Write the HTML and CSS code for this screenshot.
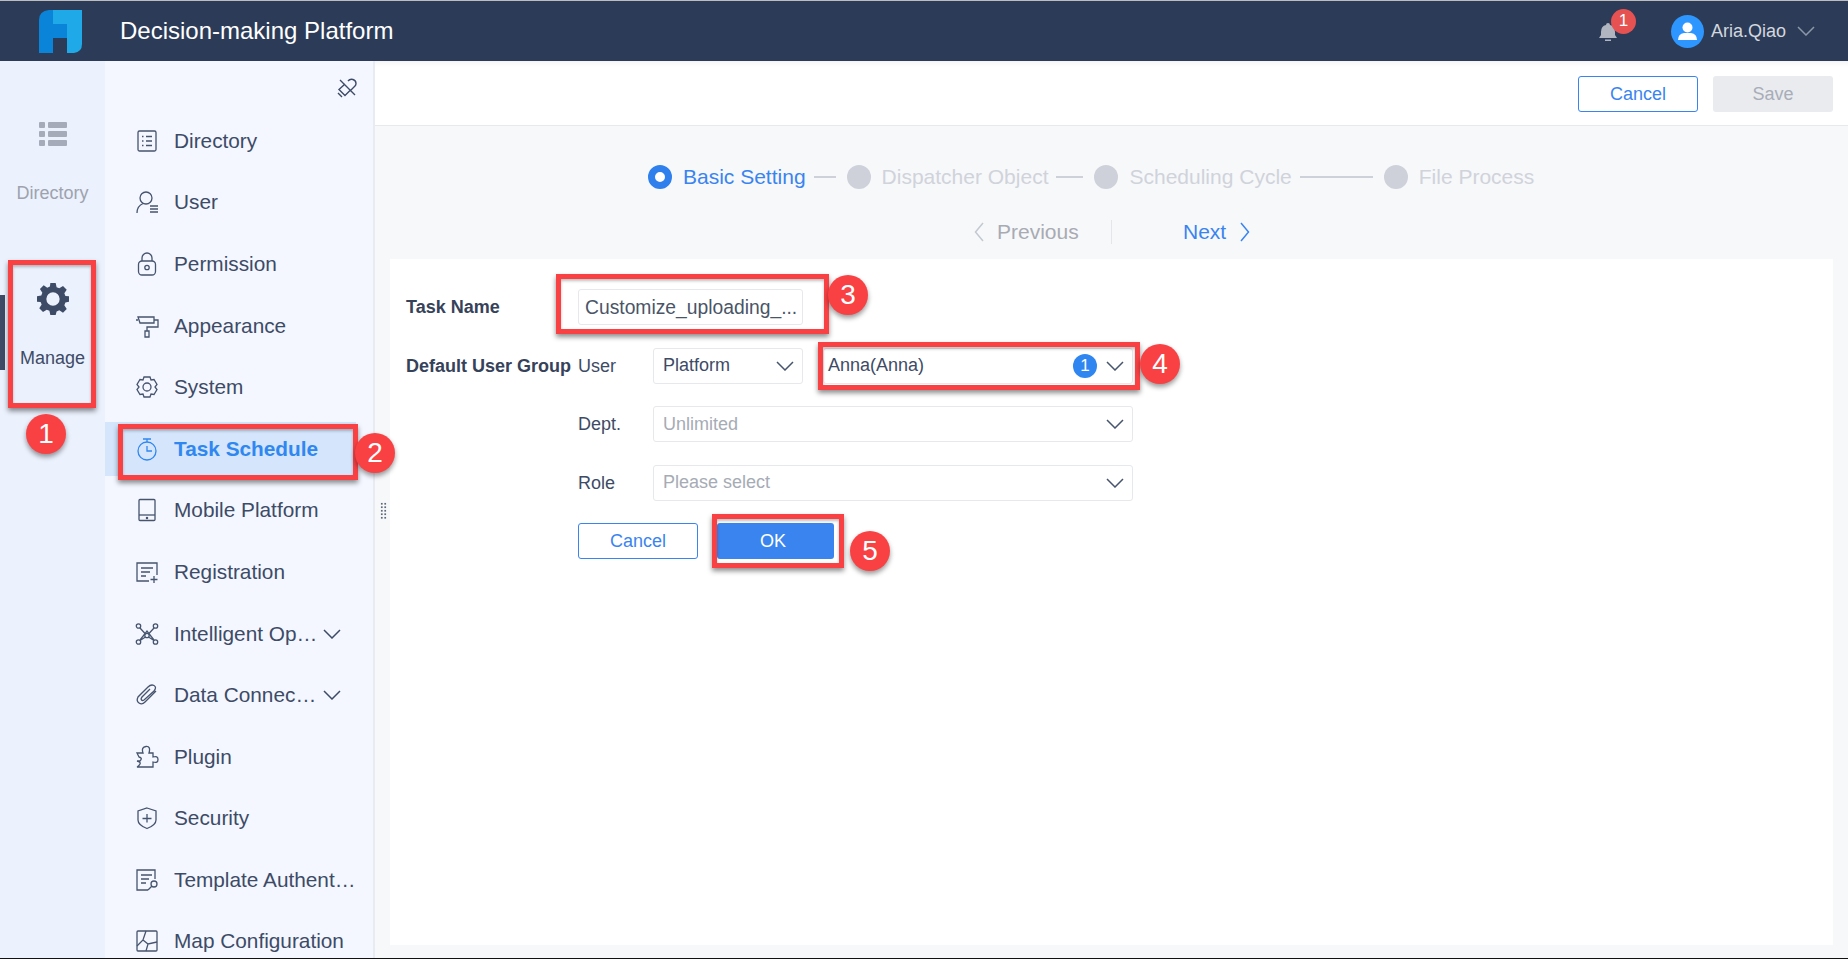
FILE: index.html
```html
<!DOCTYPE html>
<html lang="en">
  <head>
    <meta charset="UTF-8" />
    <meta name="viewport" content="width=device-width, initial-scale=1.0" />
    <title>Decision-making Platform</title>
    <link rel="stylesheet" href="styles.css">
  </head>
  <body>
    <svg class="defs" width="0" height="0">
      <symbol id="chev" viewBox="0 0 18 10"><path d="M1 1l8 8 8-8" fill="none" stroke="currentColor" stroke-width="1.5"/></symbol>
    </svg>
    <div class="app">
      <header class="topbar">
        <svg class="logo" width="44" height="44" viewBox="0 0 44 44">
          <path d="M14 0h29v34q0 8-8 9h-7V14h-14z" fill="#1fa9e8"/>
          <path d="M14 0v14h14v14H14v15H0V10Q0 1 10 0z" fill="#0a84d8"/>
        </svg>
        <div class="title">Decision-making Platform</div>
        <div class="bell">
          <svg width="18" height="19" viewBox="0 0 18 19"><path d="M9 0q2 0 2 2q5 1 5 7v3l2 3H0l2-3V9q0-6 5-7q0-2 2-2zM6 16.500h6v1.500H6z" fill="#b0b5bf"/></svg>
          <span class="bell-badge">1</span>
        </div>
        <div class="avatar">
          <svg width="19" height="19" viewBox="0 0 19 19"><circle cx="9.500" cy="5.500" r="5" fill="#fff"/><path d="M0 18q0-6 6-7h7q6 1 6 7z" fill="#fff"/></svg>
        </div>
        <div class="username">Aria.Qiao</div>
        <svg class="user-chev"><use href="#chev"/></svg>
      </header>

      <div class="main">
        <nav class="rail">
          <div class="rail-item">
            <svg class="rail-icon" width="30" height="30" viewBox="0 0 30 30" fill="#a5abb8">
              <rect x="1" y="3" width="6" height="6" rx="1"/><rect x="10" y="3" width="19" height="6" rx="1"/>
              <rect x="1" y="12" width="6" height="6" rx="1"/><rect x="10" y="12" width="19" height="6" rx="1"/>
              <rect x="1" y="21" width="6" height="6" rx="1"/><rect x="10" y="21" width="19" height="6" rx="1"/>
            </svg>
            <span class="rail-label">Directory</span>
          </div>
          <div class="rail-item active">
            <svg class="rail-icon" width="32" height="32" viewBox="0 0 24 24" fill="#3d4b66">
              <path fill-rule="evenodd" d="M10 0h4l.7 3.200 2 .8L19.500 2.200l2.800 2.800L20.500 7.700l.8 2 2.700.3v4l-2.700.7-.8 2 1.800 2.800-2.800 2.800-2.800-1.800-2 .8L14 24h-4l-.7-3.200-2-.8-2.800 1.800-2.800-2.800 1.800-2.800-.8-2L0 14v-4l3.200-.7.8-2L2.200 4.500 5 1.700l2.700 1.800 2-.8zM12 7a5 5 0 1 0 0 10 5 5 0 0 0 0-10z"/>
            </svg>
            <span class="rail-label">Manage</span>
          </div>
        </nav>

        <aside class="side">
          <div class="pin-row">
            <svg width="20" height="20" viewBox="0 0 20 20" fill="none" stroke="#3d4b66" stroke-width="1.400">
              <path d="M3 2l15 15M11 3q2-2.500 5-1.500t3 4q0 1.500-1 2.500l-5 5M8 6l-6 5.500 6 6 5-5M1 15l4 4"/>
            </svg>
          </div>
          <ul class="menu">
            <li class="menu-item">
              <svg class="ico" viewBox="0 0 24 24"><rect x="3" y="2" width="18" height="20" rx="1.500"/><path d="M11 7.500h6M11 12h6M11 16.500h6M7 7.500h1.500M7 12h1.500M7 16.500h1.500"/></svg>
              <span class="menu-text">Directory</span>
            </li>
            <li class="menu-item">
              <svg class="ico" viewBox="0 0 24 24"><circle cx="11" cy="8" r="6"/><path d="M2 23q0-7 6-9.500M15 16h8M15 19h8M15 22h8"/></svg>
              <span class="menu-text">User</span>
            </li>
            <li class="menu-item">
              <svg class="ico" viewBox="0 0 24 24"><rect x="3.500" y="9" width="17" height="14" rx="3.500"/><path d="M7 9V6a5 5 0 0 1 10 0v3"/><circle cx="12" cy="15.500" r="2.200"/></svg>
              <span class="menu-text">Permission</span>
            </li>
            <li class="menu-item">
              <svg class="ico" viewBox="0 0 24 24"><path d="M3 3h16v6H5zM3 6H1M19 6h4v7H12v4M10 17h4v6h-4z"/></svg>
              <span class="menu-text">Appearance</span>
            </li>
            <li class="menu-item">
              <svg class="ico" viewBox="0 0 24 24"><path d="M9 2h6l1 3 3-.5 3 5-2 2.500 2 2.500-3 5-3-.5-1 3H9l-1-3-3 .5-3-5L4 12 2 9.500l3-5 3 .5z"/><circle cx="12" cy="12" r="4"/></svg>
              <span class="menu-text">System</span>
            </li>
            <li class="menu-item active">
              <svg class="ico" viewBox="0 0 24 24"><circle cx="12" cy="14" r="9"/><path d="M8 2h8M12 2v3M12 9v5h5"/></svg>
              <span class="menu-text">Task Schedule</span>
            </li>
            <li class="menu-item">
              <svg class="ico" viewBox="0 0 24 24"><rect x="4" y="1.500" width="16" height="21" rx="1"/><path d="M4 17h16"/><circle cx="12" cy="20" r=".6"/></svg>
              <span class="menu-text">Mobile Platform</span>
            </li>
            <li class="menu-item">
              <svg class="ico" viewBox="0 0 24 24"><path d="M14 21H2V3h20v12M6 8h12M6 12h9M6 16h5M19 16v7M15.500 19.500h7"/></svg>
              <span class="menu-text">Registration</span>
            </li>
            <li class="menu-item">
              <svg class="ico" viewBox="0 0 24 24"><circle cx="3.500" cy="4" r="2.200"/><circle cx="20.500" cy="4" r="2.200"/><circle cx="3.500" cy="20" r="2.200"/><circle cx="20.500" cy="20" r="2.200"/><circle cx="12" cy="13.500" r="2.200"/><path d="M5 6l5.500 6M19 6l-5.500 6M5 18.500l5.500-3.500M19 18.500L13.500 15M5 18l7-9 7 9"/></svg>
              <span class="menu-text">Intelligent Operation</span>
              <svg class="menu-chev"><use href="#chev"/></svg>
            </li>
            <li class="menu-item">
              <svg class="ico" viewBox="0 0 24 24"><path d="M21 8L10 19q-3 3-6 1t-1-6L13 4q3-3 6-1.500T19 8L9 17q-1.500 1-2.500 0T7 14l8-8"/></svg>
              <span class="menu-text">Data Connection</span>
              <svg class="menu-chev"><use href="#chev"/></svg>
            </li>
            <li class="menu-item">
              <svg class="ico" viewBox="0 0 24 24"><path d="M2 8h6Q6 2 11 1.500T14 8h4v4q5-1.500 5 2.500T18 17v5H2q2-1 3-3t-3-3h3q3-3-1-4z"/></svg>
              <span class="menu-text">Plugin</span>
            </li>
            <li class="menu-item">
              <svg class="ico" viewBox="0 0 24 24"><path d="M12 2l9 3v9q0 5-9 8.500Q3 19 3 14V5zM12 8v8.500M7.500 12.500h9"/></svg>
              <span class="menu-text">Security</span>
            </li>
            <li class="menu-item">
              <svg class="ico" viewBox="0 0 24 24"><path d="M13 22H2V2h18v9M6 7h11M6 11h8M6 15h5"/><circle cx="19" cy="16" r="3"/><path d="M17 18l-4 4"/></svg>
              <span class="menu-text">Template Authentication</span>
            </li>
            <li class="menu-item">
              <svg class="ico" viewBox="0 0 24 24"><rect x="2" y="2" width="20" height="20" rx="1"/><path d="M11 2l-3 9-6 6M8 11l5 4 9-2M13 15l-2 7"/></svg>
              <span class="menu-text">Map Configuration</span>
            </li>
          </ul>
        </aside>

        <section class="content">
          <div class="toolbar">
            <button class="btn btn-line" type="button">Cancel</button>
            <button class="btn btn-off" type="button">Save</button>
          </div>

          <div class="steps">
            <span class="dot dot-on"></span>
            <span class="step-text on">Basic Setting</span>
            <span class="step-line first"></span>
            <span class="dot"></span>
            <span class="step-text">Dispatcher Object</span>
            <span class="step-line second"></span>
            <span class="dot"></span>
            <span class="step-text">Scheduling Cycle</span>
            <span class="step-line long"></span>
            <span class="dot"></span>
            <span class="step-text">File Process</span>
          </div>

          <div class="pager">
            <div class="pager-prev">
              <svg width="10" height="20" viewBox="0 0 10 20"><path d="M9 1L1.500 10 9 19" fill="none" stroke="#c4c8d0" stroke-width="1.500"/></svg>
              <span>Previous</span>
            </div>
            <div class="pager-next">
              <span>Next</span>
              <svg width="10" height="20" viewBox="0 0 10 20"><path d="M1 1l7.500 9L1 19" fill="none" stroke="#3a84f0" stroke-width="1.500"/></svg>
            </div>
          </div>

          <div class="card">
            <div class="form">
              <div class="label-strong">Task Name</div>
              <div class="field task-name">Customize_uploading_...</div>

              <div class="label-strong">Default User Group</div>
              <div class="label">User</div>
              <div class="field select">Platform<svg class="chev"><use href="#chev"/></svg></div>
              <div class="field select anna">Anna(Anna)<span class="count">1</span><svg class="chev"><use href="#chev"/></svg></div>

              <div class="label col-two">Dept.</div>
              <div class="field select wide muted">Unlimited<svg class="chev"><use href="#chev"/></svg></div>

              <div class="label col-two">Role</div>
              <div class="field select wide muted">Please select<svg class="chev"><use href="#chev"/></svg></div>

              <div class="form-btns">
                <button class="btn btn-line" type="button">Cancel</button>
                <button class="btn btn-primary" type="button">OK</button>
              </div>
            </div>
          </div>
          <span class="handle"></span>
        </section>
      </div>

      <!-- tutorial callouts drawn over the screen -->
      <span class="box box-1"></span>
      <span class="box box-2"></span>
      <span class="box box-3"></span>
      <span class="box box-4"></span>
      <span class="box box-5"></span>
      <span class="num num-1">1</span>
      <span class="num num-2">2</span>
      <span class="num num-3">3</span>
      <span class="num num-4">4</span>
      <span class="num num-5">5</span>
    </div>
  </body>
</html>
```

FILE: styles.css
```css
* {
  box-sizing: border-box;
}
body {
  margin: 0;
  font-family: "Liberation Sans", Arial, sans-serif;
  color: #3d4b66;
  overflow: hidden;
}
.defs {
  position: absolute;
}
.app {
  position: relative;
  height: 959px;
  display: flex;
  flex-direction: column;
  border-bottom: 1px solid #111;
  overflow: hidden;
}

/* top bar */
.topbar {
  height: 61px;
  flex: none;
  display: flex;
  align-items: center;
  background-color: #2c3c58;
  border-top: 1px solid #bdbdbd;
  padding-left: 39px;
  padding-right: 33px;
}
.logo {
  flex: none;
  margin-top: 2px;
}
.title {
  margin-left: 37px;
  font-size: 24px;
  color: #fff;
  flex: 1;
}
.bell {
  position: relative;
  display: flex;
  margin-top: 2px;
  margin-right: 54px;
}
.bell-badge {
  position: absolute;
  left: 12px;
  top: -14px;
  width: 25px;
  height: 25px;
  border-radius: 50%;
  background-color: #e65252;
  color: #fff;
  font-size: 17px;
  line-height: 24px;
  text-align: center;
}
.avatar {
  width: 33px;
  height: 33px;
  border-radius: 50%;
  background-color: #2d96ff;
  display: flex;
  align-items: center;
  justify-content: center;
}
.username {
  margin-left: 7px;
  font-size: 18px;
  color: #d3d7de;
}
.user-chev {
  width: 18px;
  height: 10px;
  margin-left: 11px;
  color: #8d97a8;
}

.main {
  flex: 1;
  display: flex;
  min-height: 0;
}

/* far left rail */
.rail {
  width: 105px;
  flex: none;
  background-color: #ebf1fd;
  padding-top: 48px;
}
.rail-item {
  position: relative;
  height: 164.5px;
  padding-top: 10px;
  display: flex;
  flex-direction: column;
  align-items: center;
}
.rail-label {
  margin-top: 33px;
  font-size: 18px;
  line-height: 22px;
  color: #9da3ae;
}
.rail-item.active .rail-icon {
  margin-top: -1px;
  margin-bottom: -1px;
}
.rail-item.active .rail-label {
  color: #3d4b66;
}
.rail-item.active::before {
  content: "";
  position: absolute;
  left: 0;
  top: 21px;
  width: 5px;
  height: 75px;
  background-color: #3d4b66;
}

/* second menu */
.side {
  width: 270px;
  flex: none;
  background-color: #f4f7ff;
  border-right: 2px solid #e8ebf2;
  overflow: hidden;
}
.pin-row {
  height: 48px;
  display: flex;
  justify-content: flex-end;
  padding: 17px 16px 0 0;
}
.menu {
  list-style: none;
  margin: 0;
  padding: 4.75px 0 0;
  display: flex;
  flex-direction: column;
  gap: 7.6px;
}
.menu-item {
  height: 54px;
  flex: none;
  margin-right: 17px;
  padding-left: 30px;
  display: flex;
  align-items: center;
  font-size: 20.800px;
}
.menu-item.active {
  background-color: #d4e5fc;
  color: #2f87f0;
  font-weight: bold;
}
.ico {
  width: 24px;
  height: 24px;
  flex: none;
  margin-right: 15px;
  fill: none;
  stroke: #46546e;
  stroke-width: 1.300;
}
.active .ico {
  stroke: #2f87f0;
}
.menu-text {
  flex: 1;
  min-width: 0;
  white-space: nowrap;
  overflow: hidden;
  text-overflow: ellipsis;
}
.menu-chev {
  width: 18px;
  height: 10px;
  flex: none;
  margin-left: 3px;
  margin-right: 15px;
}

/* main panel */
.content {
  position: relative;
  flex: 1;
  display: flex;
  flex-direction: column;
  background-color: #f7f8fa;
  min-width: 0;
}
.toolbar {
  height: 65px;
  flex: none;
  display: flex;
  justify-content: flex-end;
  gap: 15px;
  padding: 15px 15px 0 0;
  background-color: #fff;
  border-bottom: 1px solid #e8e9ec;
  box-shadow: inset 0 7px 6px -6px rgba(0, 0, 0, 0.07);
}
.btn {
  width: 120px;
  height: 36px;
  border-radius: 3px;
  border: 1px solid transparent;
  font-family: inherit;
  font-size: 18px;
  padding: 0;
}
.btn-line {
  background-color: #fff;
  border-color: #3a84f0;
  color: #3a84f0;
}
.btn-off {
  background-color: #e9ebef;
  color: #a8adb8;
}
.btn-primary {
  background-color: #3a84f0;
  color: #fff;
}

.steps {
  margin-top: 39px;
  height: 24px;
  padding-left: 273px;
  display: flex;
  align-items: center;
}
.dot {
  width: 24px;
  height: 24px;
  flex: none;
  border-radius: 50%;
  background-color: #ced1d9;
}
.dot-on {
  background-color: #fff;
  border: 7px solid #2f80ed;
}
.step-text {
  margin-left: 11px;
  font-size: 21px;
  color: #d0d3da;
  white-space: nowrap;
}
.step-text.on {
  color: #3a84f0;
}
.step-line {
  height: 2px;
  background-color: #ced1d9;
  margin: 0 11px 0 8px;
}
.step-line.first {
  width: 22px;
}
.step-line.second {
  width: 27px;
}
.step-line.long {
  width: 73px;
}

.pager {
  margin-top: 31px;
  height: 24px;
  padding-left: 599px;
  display: flex;
  align-items: center;
  font-size: 21px;
}
.pager-prev {
  width: 138px;
  display: flex;
  align-items: center;
  gap: 13px;
  color: #a8abb3;
  border-right: 1px solid #e4e6ea;
}
.pager-next {
  margin-left: 71px;
  display: flex;
  align-items: center;
  gap: 14px;
  color: #3a84f0;
}

.card {
  flex: 1;
  margin: 15px 15px 13px 15px;
  padding: 30px 0 0 16px;
  background-color: #fff;
}
.form {
  display: grid;
  grid-template-columns: 172px 75px 150px 20px 310px;
  grid-auto-rows: 36px;
  row-gap: 22.5px;
  align-items: center;
  font-size: 18px;
}
.label-strong {
  grid-column: 1;
  padding-top: 1px;
  font-weight: bold;
  white-space: nowrap;
  color: #36425a;
}
.label {
  padding-top: 1px;
}
.col-two {
  grid-column: 2;
}
.field {
  height: 36px;
  border: 1px solid #e6e8ec;
  border-radius: 3px;
  padding-left: 9px;
  display: flex;
  align-items: center;
}
.task-name {
  grid-column: 2 / span 2;
  padding-left: 6px;
  padding-top: 2px;
  font-size: 19.300px;
  color: #4a5568;
}
.select {
  position: relative;
}
.wide {
  grid-column: 3 / span 3;
}
.anna {
  grid-column: 5;
  padding-left: 4px;
}
.muted {
  color: #a6abb5;
}
.chev {
  width: 18px;
  height: 10px;
  margin-left: auto;
  margin-right: 8px;
  color: #46546e;
  flex: none;
}
.count {
  flex: none;
  width: 24px;
  height: 24px;
  margin-left: auto;
  border-radius: 50%;
  background-color: #2f86f1;
  color: #fff;
  font-size: 17px;
  line-height: 24px;
  text-align: center;
}
.count + .chev {
  margin-left: 9px;
}
.form-btns {
  grid-column: 2 / span 4;
  display: flex;
  gap: 19px;
}
.form-btns .btn {
  padding-top: 1px;
}
.form-btns .btn-primary {
  width: 117px;
  padding-right: 5px;
}

/* resize grip */
.handle {
  position: absolute;
  left: 5px;
  top: 441px;
  width: 7px;
  height: 18px;
  background-image: radial-gradient(circle, #5d677a 1px, transparent 1px);
  background-size: 3.500px 3.500px;
}

/* callouts */
.box {
  position: absolute;
  border: 5px solid #f94144;
  box-shadow: 0 3px 5px rgba(0, 0, 0, 0.45), inset 0 2px 3px rgba(0, 0, 0, 0.25);
}
.box-1 {
  left: 8px;
  top: 260px;
  width: 88px;
  height: 148px;
}
.box-2 {
  left: 118px;
  top: 424px;
  width: 240px;
  height: 56px;
}
.box-3 {
  left: 556px;
  top: 274px;
  width: 273px;
  height: 60px;
}
.box-4 {
  left: 818px;
  top: 342px;
  width: 322px;
  height: 48px;
}
.box-5 {
  left: 712px;
  top: 514px;
  width: 132px;
  height: 54px;
}
.num {
  position: absolute;
  width: 40px;
  height: 40px;
  border-radius: 50%;
  background-color: #f94144;
  box-shadow: 0 3px 5px rgba(0, 0, 0, 0.4);
  color: #fff;
  font-size: 28px;
  line-height: 40px;
  text-align: center;
}
.num-1 {
  left: 26px;
  top: 414px;
}
.num-2 {
  left: 355px;
  top: 433px;
}
.num-3 {
  left: 828px;
  top: 275px;
}
.num-4 {
  left: 1140px;
  top: 344px;
}
.num-5 {
  left: 850px;
  top: 531px;
}
```
